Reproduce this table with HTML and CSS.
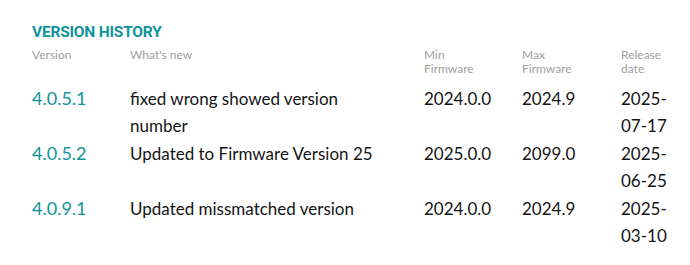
FILE: index.html
```html
<!DOCTYPE html>
<html lang="en">
<head>
<meta charset="utf-8">
<title>Version history</title>
<link rel="stylesheet" href="styles.css">
</head>
<body>
<section class="history">
  <h2 class="title">VERSION HISTORY</h2>
  <div class="row head">
    <div>Version</div>
    <div>What's new</div>
    <div>Min<br>Firmware</div>
    <div>Max<br>Firmware</div>
    <div>Release<br>date</div>
  </div>
  <div class="row item">
    <div class="ver">4.0.5.1</div>
    <div class="desc">fixed wrong showed version number</div>
    <div>2024.0.0</div>
    <div>2024.9</div>
    <div class="date">2025-<wbr>07-17</div>
  </div>
  <div class="row item">
    <div class="ver">4.0.5.2</div>
    <div class="desc">Updated to Firmware Version 25</div>
    <div>2025.0.0</div>
    <div>2099.0</div>
    <div class="date">2025-<wbr>06-25</div>
  </div>
  <div class="row item">
    <div class="ver">4.0.9.1</div>
    <div class="desc">Updated missmatched version</div>
    <div>2024.0.0</div>
    <div>2024.9</div>
    <div class="date">2025-<wbr>03-10</div>
  </div>
</section>
</body>
</html>
```
FILE: styles.css
```css
html, body {
  margin: 0;
  padding: 0;
  background: #ffffff;
}
body {
  font-family: Lato, "Noto Sans", sans-serif;
  color: #141414;
}
.history {
  padding: 22px 0 0 32px;
}
.title {
  margin: 0;
  font-family: Roboto, Lato, sans-serif;
  font-size: 15.5px;
  line-height: 20px;
  font-weight: 700;
  color: #0f9499;
  letter-spacing: -0.2px;
}
.row {
  display: grid;
  grid-template-columns: 98px 294px 98px 99px 56px;
}
.row > div {
  padding-right: 20px;
}
.row > .date {
  padding-right: 0;
}
.row > .desc {
  padding-right: 34px;
}
.head {
  margin-top: 6px;
  margin-bottom: 8px;
  font-size: 12px;
  line-height: 14.4px;
  color: #a0a0a0;
}
.item {
  font-size: 17px;
  line-height: 27.5px;
}
.ver {
  font-size: 18px;
  color: #0f9499;
}
```
